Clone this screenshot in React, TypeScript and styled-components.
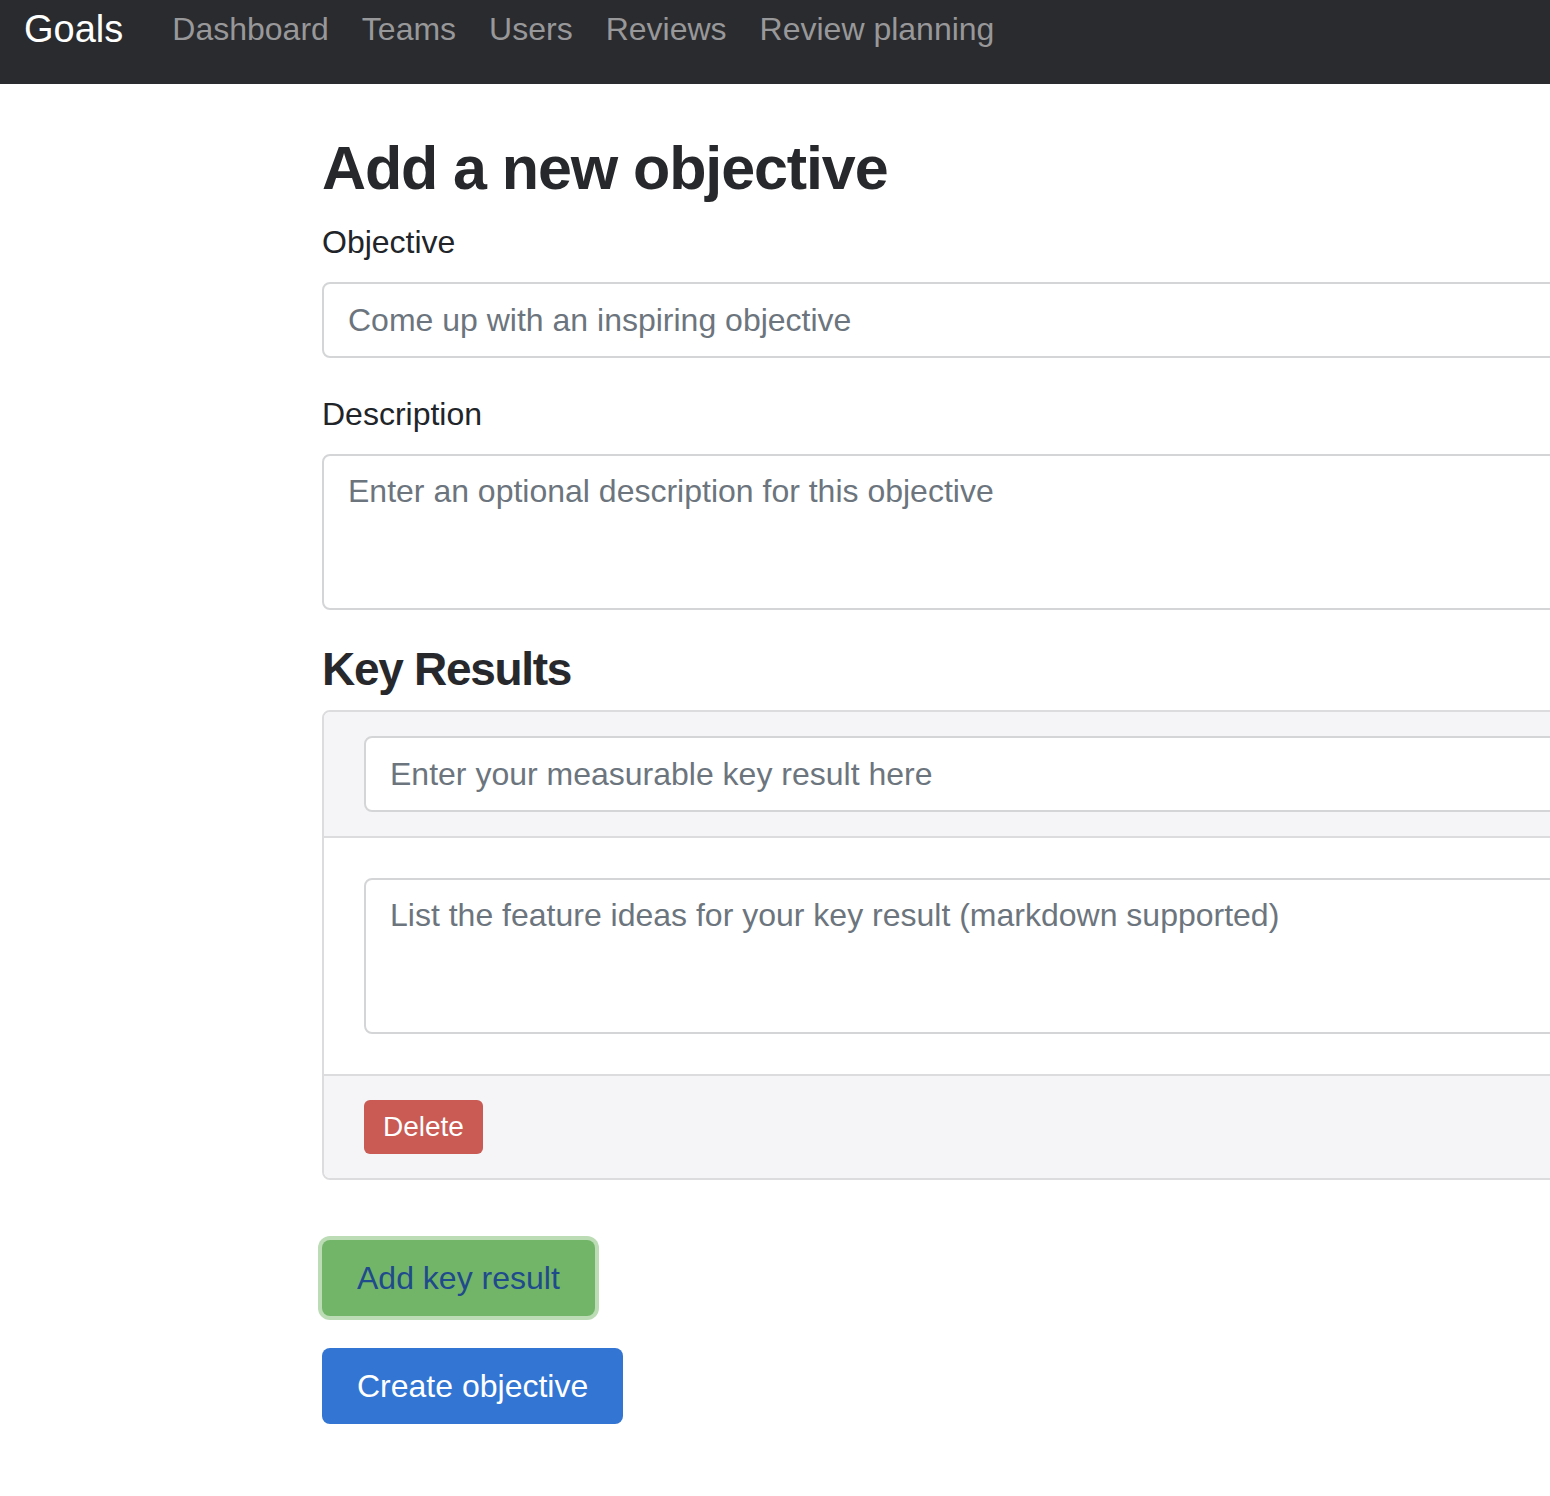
import styled, { createGlobalStyle } from "styled-components";

const GlobalStyle = createGlobalStyle`
  html, body {
    margin: 0;
    padding: 0;
    overflow-x: hidden;
    background: #ffffff;
    font-family: "Liberation Sans", Arial, sans-serif;
    color: #212529;
  }
  * {
    box-sizing: border-box;
  }
`;

const navLinks = ["Dashboard", "Teams", "Users", "Reviews", "Review planning"];

export default function App() {
  return (
    <>
      <GlobalStyle />
      <Navbar>
        <Brand>Goals</Brand>
        <NavList>
          {navLinks.map((link) => (
            <NavLink key={link}>{link}</NavLink>
          ))}
        </NavList>
      </Navbar>
      <Main>
        <Title>Add a new objective</Title>
        <FormGroup>
          <Label>Objective</Label>
          <Input placeholder="Come up with an inspiring objective" />
        </FormGroup>
        <FormGroup>
          <Label>Description</Label>
          <TextArea placeholder="Enter an optional description for this objective" />
        </FormGroup>
        <SubTitle>Key Results</SubTitle>
        <Card>
          <CardHeader>
            <Input placeholder="Enter your measurable key result here" />
          </CardHeader>
          <CardBody>
            <TextArea placeholder="List the feature ideas for your key result (markdown supported)" />
          </CardBody>
          <CardFooter>
            <DeleteButton>Delete</DeleteButton>
          </CardFooter>
        </Card>
        <Actions>
          <Button $variant="success">Add key result</Button>
          <Button $variant="primary">Create objective</Button>
        </Actions>
      </Main>
    </>
  );
}

const Navbar = styled.nav`
  display: flex;
  align-items: flex-start;
  height: 84px;
  padding: 0 24px;
  background-color: #2a2b2e;
`;

const Brand = styled.a`
  font-size: 38px;
  line-height: 40px;
  padding-top: 9px;
  color: #ffffff;
  margin-right: 49px;
`;

const NavList = styled.div`
  display: flex;
  gap: 33px;
`;

const NavLink = styled.a`
  font-size: 32px;
  line-height: 32px;
  padding-top: 13px;
  color: #98989a;
`;

const Main = styled.main`
  display: flex;
  flex-direction: column;
  align-items: flex-start;
  padding: 48px 0 80px 322px;
  width: 1900px;
`;

const Title = styled.h1`
  margin: 0 0 13px;
  font-size: 61px;
  line-height: 1.2;
  font-weight: 700;
  letter-spacing: -1.1px;
  color: #27282b;
`;

const SubTitle = styled.h3`
  margin: 0 0 13px;
  font-size: 46px;
  line-height: 1.2;
  font-weight: 700;
  letter-spacing: -1.3px;
  color: #27282b;
`;

const FormGroup = styled.div`
  display: flex;
  flex-direction: column;
  width: 100%;
  margin-bottom: 32px;
`;

const Label = styled.label`
  font-size: 32px;
  line-height: 48px;
  margin-bottom: 16px;
  color: #212529;
`;

const fieldStyles = `
  display: block;
  width: 100%;
  font-family: "Liberation Sans", Arial, sans-serif;
  font-size: 32px;
  line-height: 46px;
  padding: 12px 24px;
  color: #495057;
  background: #ffffff;
  border: 2px solid #d4d5d7;
  border-radius: 8px;
  outline: none;
  &::placeholder {
    color: #6c757d;
    opacity: 1;
  }
`;

const Input = styled.input`
  ${fieldStyles}
  height: 76px;
`;

const TextArea = styled.textarea`
  ${fieldStyles}
  height: 156px;
  resize: none;
`;

const Card = styled.div`
  width: 100%;
  border: 2px solid #dcdcde;
  border-radius: 8px;
  overflow: hidden;
`;

const CardHeader = styled.div`
  padding: 24px 40px;
  background-color: #f5f5f7;
  border-bottom: 2px solid #dcdcde;
`;

const CardBody = styled.div`
  padding: 40px;
  background-color: #ffffff;
`;

const CardFooter = styled.div`
  display: flex;
  padding: 24px 40px;
  background-color: #f5f5f7;
  border-top: 2px solid #dcdcde;
`;

const DeleteButton = styled.button`
  height: 54px;
  padding: 0 19px;
  font-family: "Liberation Sans", Arial, sans-serif;
  font-size: 28px;
  color: #ffffff;
  background-color: #c95b54;
  border: none;
  border-radius: 6px;
`;

const Actions = styled.div`
  display: flex;
  flex-direction: column;
  align-items: flex-start;
  gap: 32px;
  margin-top: 60px;
`;

const Button = styled.button<{ $variant: "success" | "primary" }>`
  height: 76px;
  padding: 0 35px;
  font-family: "Liberation Sans", Arial, sans-serif;
  font-size: 32px;
  border: none;
  border-radius: 8px;
  color: ${({ $variant }) => ($variant === "success" ? "#1f4a8c" : "#ffffff")};
  background-color: ${({ $variant }) =>
    $variant === "success" ? "#72b569" : "#3275d3"};
  box-shadow: ${({ $variant }) =>
    $variant === "success" ? "0 0 0 4px #bbdcb5" : "none"};
`;
